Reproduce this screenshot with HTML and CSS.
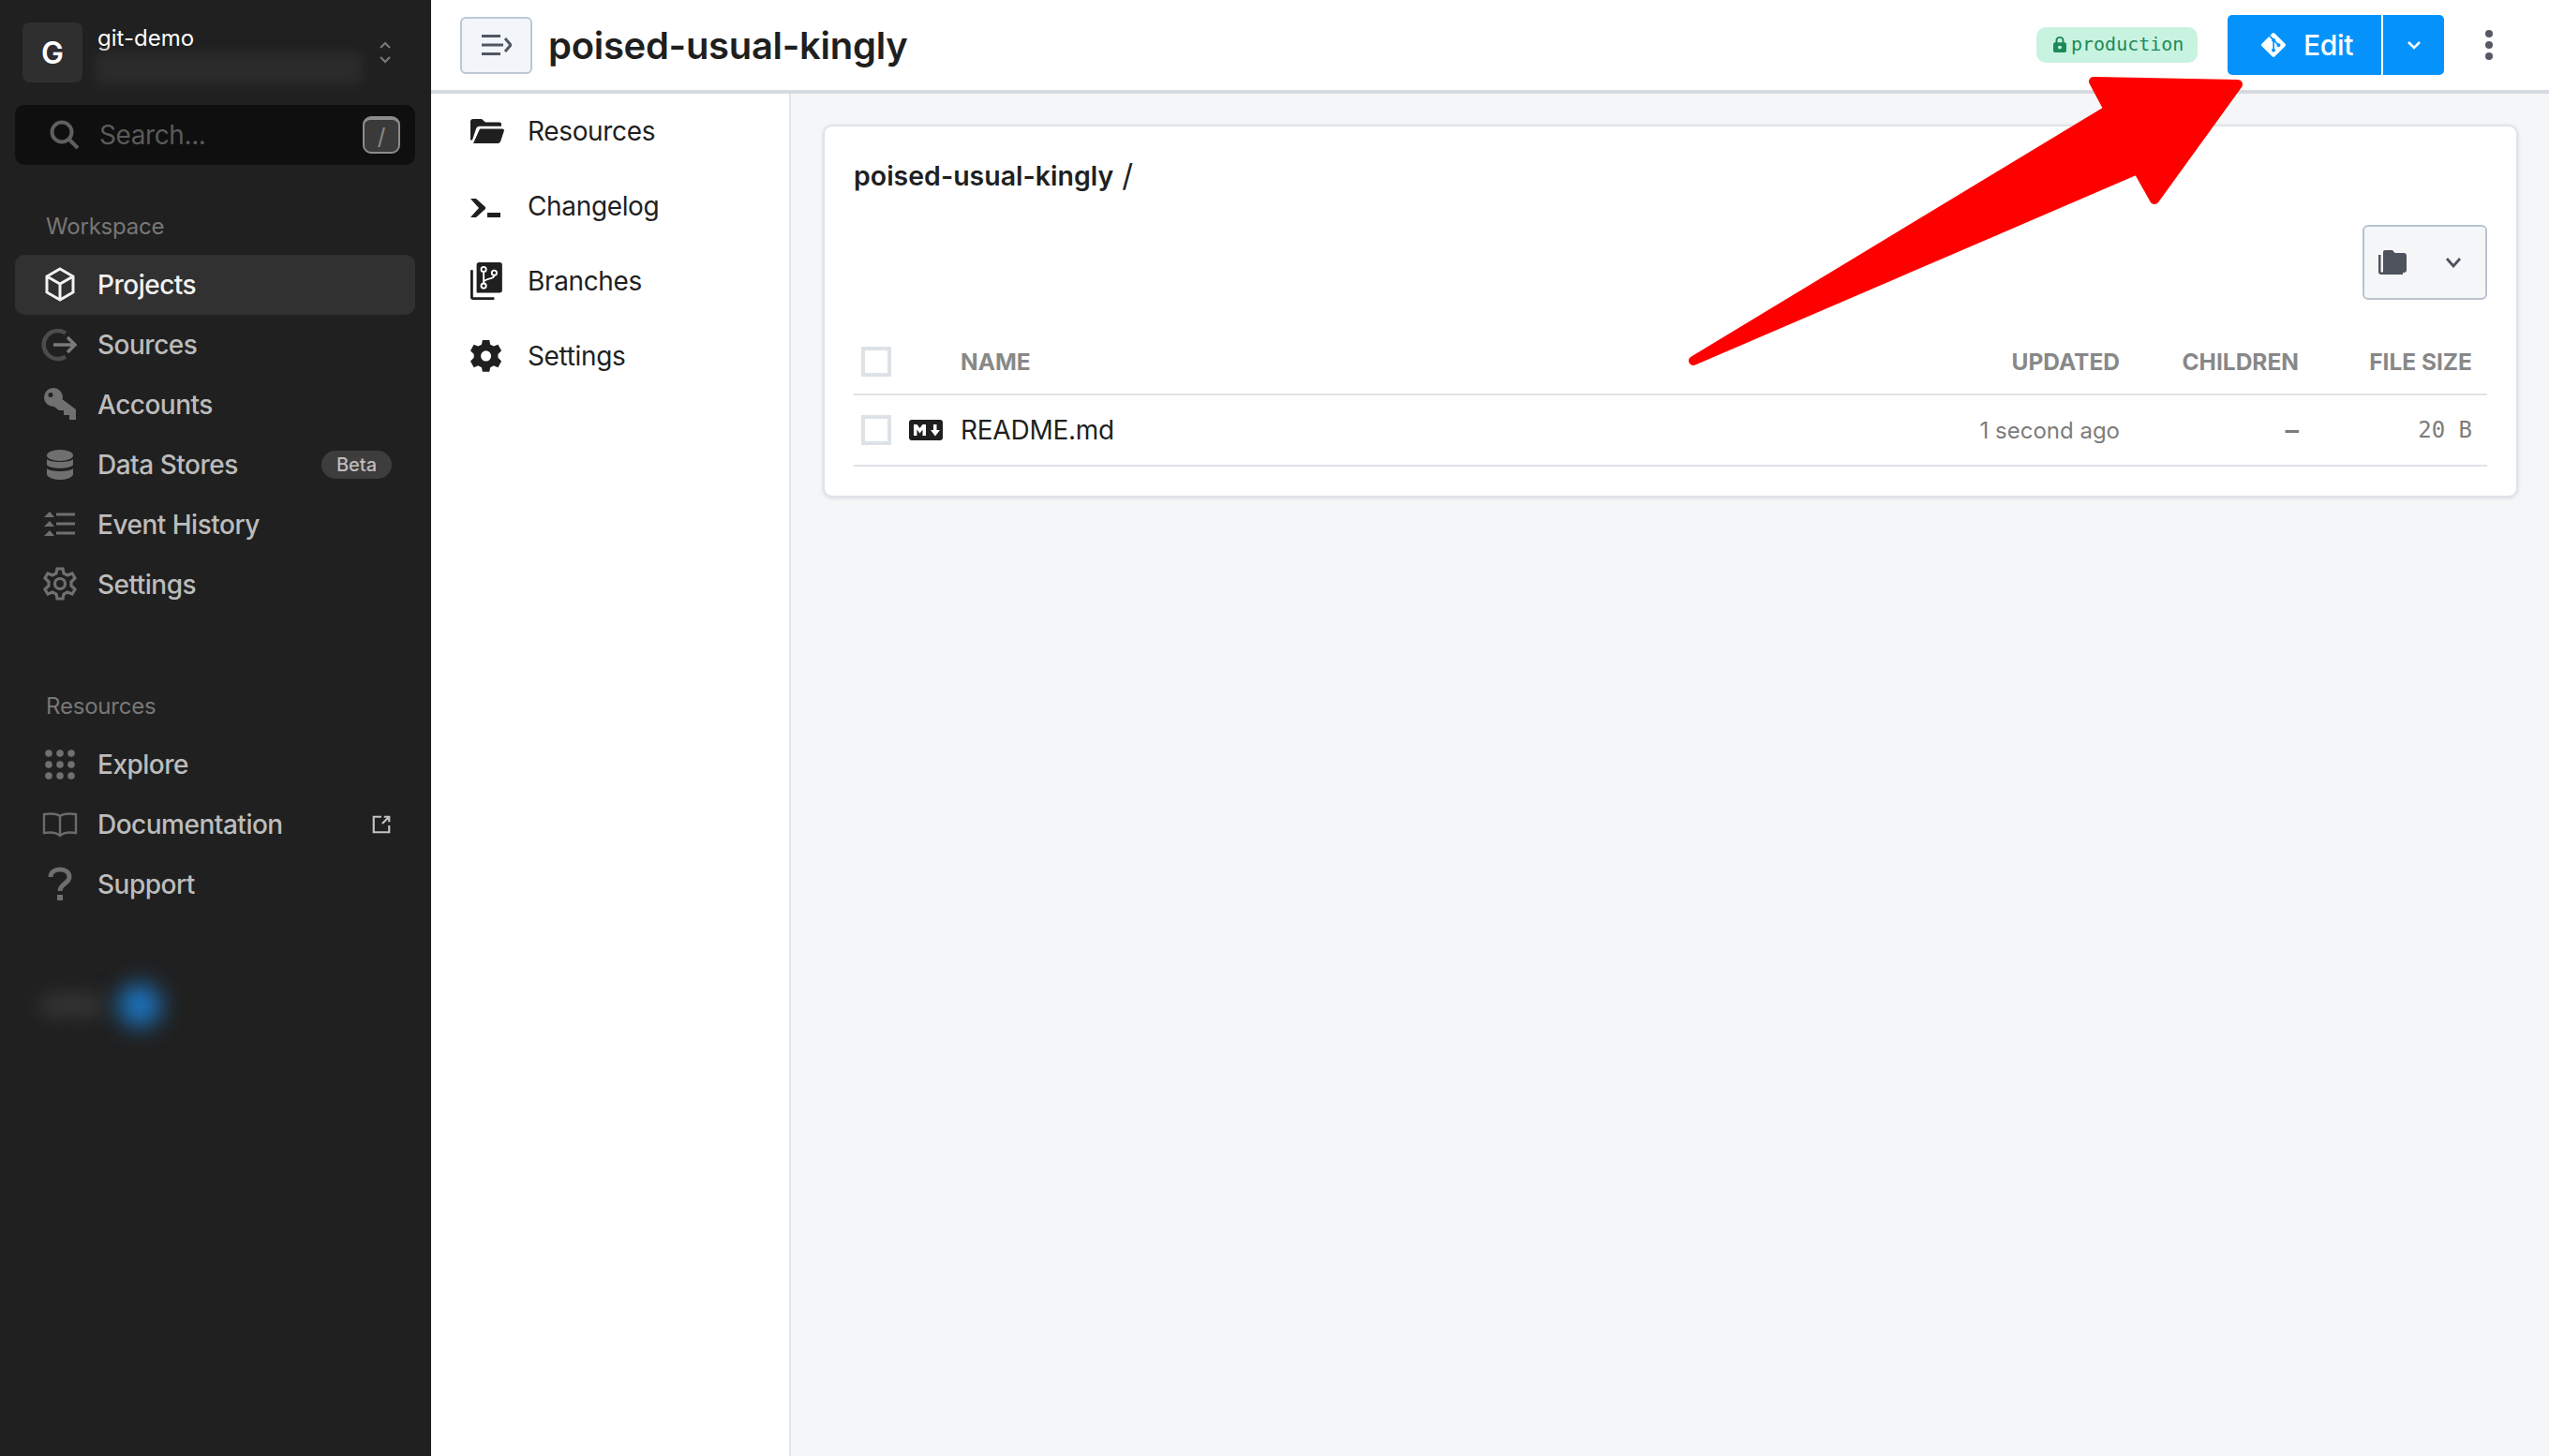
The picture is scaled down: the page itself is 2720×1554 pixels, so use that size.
FILE: index.html
```html
<!DOCTYPE html>
<html lang="en">
<head>
<meta charset="utf-8">
<title>poised-usual-kingly</title>
<link rel="stylesheet" href="styles.css">
</head>
<body>
<div class="app">
  <aside class="sidebar">
    <div class="org">
      <div class="avatar">G</div>
      <div class="org-text">
        <div class="org-name">git-demo</div>
        <div class="org-blur"></div>
      </div>
      <svg class="updown" viewBox="0 0 14 24"><path d="M2 7l5-5 5 5M2 17l5 5 5-5"/></svg>
    </div>
    <div class="search">
      <svg class="search-icon" viewBox="0 0 32 32"><circle cx="13" cy="13" r="10.5"/><path d="M20.5 20.5L30 30"/></svg>
      <span class="search-text">Search...</span>
      <span class="kbd">/</span>
    </div>
    <div class="label label-first">Workspace</div>
    <nav class="nav">
      <a class="item active">
        <span class="ico"><svg viewBox="0 0 40 40"><path class="line w" d="M20 3l14 8v17l-14 8-14-8V11zM6 11l14 8 14-8M20 19v17"/></svg></span>
        <span>Projects</span>
      </a>
      <a class="item">
        <span class="ico"><svg viewBox="0 0 40 40"><path class="line thick" d="M26 7.500A15 15 0 1 0 26 32.500"/><path class="line arrowline" d="M13 20h23M28 12l8 8-8 8"/></svg></span>
        <span>Sources</span>
      </a>
      <a class="item">
        <span class="ico"><svg viewBox="0 0 40 40"><circle class="fill" cx="13" cy="12" r="10"/><path class="fill" d="M17 10l20 15v11h-7v-5h-6v-5h-5l-9-7z"/><circle class="hole" cx="10" cy="9.500" r="2.500"/></svg></span>
        <span>Accounts</span>
      </a>
      <a class="item">
        <span class="ico"><svg viewBox="0 0 40 40"><ellipse class="fill" cx="20" cy="10" rx="14" ry="6"/><path class="fill" d="M6 14c3 4 25 4 28 0v6c-3 5-25 5-28 0zM6 24c3 4 25 4 28 0v6c0 3-6 6-14 6S6 33 6 30z"/></svg></span>
        <span>Data Stores</span>
        <span class="tag">Beta</span>
      </a>
      <a class="item">
        <span class="ico"><svg viewBox="0 0 40 40"><path class="fill" d="M9 6l5 6H3zM9 16l5 6H3zM9 26l5 6H3z"/><path class="line bars" d="M16 9h20M16 19h20M16 29h20"/></svg></span>
        <span>Event History</span>
      </a>
      <a class="item">
        <span class="ico"><svg viewBox="0 0 40 40"><path class="line gear" d="M17 3h6l1 5 4 2 5-2 3 5-4 4v4l4 4-3 5-5-2-4 2-1 5h-6l-1-5-4-2-5 2-3-5 4-4v-4l-4-4 3-5 5 2 4-2z"/><circle class="line gear" cx="20" cy="19" r="5.500"/></svg></span>
        <span>Settings</span>
      </a>
    </nav>
    <div class="label label-second">Resources</div>
    <nav class="nav">
      <a class="item">
        <span class="ico"><svg viewBox="0 0 40 40"><g class="fill"><circle cx="8" cy="8" r="3.800"/><circle cx="20" cy="8" r="3.800"/><circle cx="32" cy="8" r="3.800"/><circle cx="8" cy="20" r="3.800"/><circle cx="20" cy="20" r="3.800"/><circle cx="32" cy="20" r="3.800"/><circle cx="8" cy="32" r="3.800"/><circle cx="20" cy="32" r="3.800"/><circle cx="32" cy="32" r="3.800"/></g></svg></span>
        <span>Explore</span>
      </a>
      <a class="item">
        <span class="ico"><svg viewBox="0 0 40 40"><path class="line" d="M20 11c-4-3-10-3-17-2v20c7-1 13-1 17 3 4-4 10-4 17-3V9c-7-1-13-1-17 2zM20 11v21"/></svg></span>
        <span>Documentation</span>
        <svg class="ext" viewBox="0 0 24 24"><path d="M21 13v8H3V3h9M13 11l8-8M15 3h6v6"/></svg>
      </a>
      <a class="item">
        <span class="ico"><svg viewBox="0 0 40 40"><path class="line question" d="M10 12c0-5 4-8 10-8s10 3 10 8c0 7-10 7-10 15"/><rect class="fill" x="17" y="31" width="6" height="6"/></svg></span>
        <span>Support</span>
      </a>
    </nav>
    <div class="blurred">
      <span class="blur-gray"></span>
      <span class="blur-blue"></span>
    </div>
  </aside>

  <div class="main">
    <header class="topbar">
      <button class="toggle">
        <svg viewBox="0 0 32 22"><path d="M0 1.500h20M0 11h23M0 20.500h20M25 4l6 7-6 7"/></svg>
      </button>
      <h1 class="title">poised-usual-kingly</h1>
      <span class="badge">
        <svg viewBox="0 0 14 20" preserveAspectRatio="none"><path class="shackle" d="M3.500 9V5.500a3.500 3.500 0 0 1 7 0V9"/><path class="body" d="M2 8h10a2 2 0 0 1 2 2v8a2 2 0 0 1-2 2H2a2 2 0 0 1-2-2v-8a2 2 0 0 1 2-2zm5 4a2 2 0 1 0 0 4 2 2 0 0 0 0-4z"/></svg>
        production
      </span>
      <div class="edit">
        <span class="edit-main">
          <svg viewBox="0 0 24 24"><path d="M23.546 10.93L13.067.452c-.604-.603-1.582-.603-2.188 0L8.708 2.627l2.76 2.76c.645-.215 1.379-.07 1.889.441.516.515.658 1.258.438 1.9l2.658 2.66c.645-.223 1.387-.078 1.9.435.721.72.721 1.884 0 2.604-.719.719-1.881.719-2.6 0-.539-.541-.674-1.337-.404-1.996L12.86 8.955v6.525c.176.086.342.203.488.348.713.721.713 1.883 0 2.6-.719.721-1.889.721-2.609 0-.719-.719-.719-1.879 0-2.598.182-.18.387-.316.605-.406V8.835c-.217-.091-.424-.222-.6-.401-.545-.545-.676-1.342-.396-2.009L7.636 3.7.45 10.881c-.6.605-.6 1.584 0 2.189l10.48 10.477c.604.604 1.582.604 2.186 0l10.43-10.43c.605-.603.605-1.582 0-2.187"/></svg>
          Edit
        </span>
        <span class="edit-caret"><svg viewBox="0 0 16 10"><path d="M2 2l6 6 6-6"/></svg></span>
      </div>
      <div class="dots"><i></i><i></i><i></i></div>
    </header>
    <div class="content">
      <nav class="subnav">
        <a class="subitem">
          <svg viewBox="0 0 36 44"><g transform="translate(0 9) scale(1 .87)"><path d="M0 3a3 3 0 0 1 3-3h9l4 4h15a2 2 0 0 1 2 2v3H10a4 4 0 0 0-4 3L2 26H0zM10 12h24a2 2 0 0 1 2 2l-4 14a3 3 0 0 1-3 2H3z"/></g></svg>
          <span>Resources</span>
        </a>
        <a class="subitem">
          <svg viewBox="0 0 36 44"><path d="M0 14h6l10 9v2L6 34H0l9-10zM18 29h14v5H18z"/></svg>
          <span>Changelog</span>
        </a>
        <a class="subitem">
          <svg viewBox="0 0 36 44"><g transform="translate(0 2) scale(.94 .93)"><path d="M10 0h23a3 3 0 0 1 3 3v29a3 3 0 0 1-3 3H7V3a3 3 0 0 1 3-3z"/><path d="M0 9h3v31h24v3H3a3 3 0 0 1-3-3z"/><g class="branch"><circle cx="15" cy="8" r="2.800"/><circle cx="15" cy="27" r="2.800"/><circle cx="27" cy="12" r="2.800"/><path d="M15 11v13M27 15c0 5-12 3-12 8"/></g></g></svg>
          <span>Branches</span>
        </a>
        <a class="subitem">
          <svg viewBox="0 0 36 44"><g transform="translate(0 5) scale(.92 .94)"><path fill-rule="evenodd" d="M14 0h8l1 5 4 2 5-2 4 7-4 4v4l4 4-4 7-5-2-4 2-1 5h-8l-1-5-4-2-5 2-4-7 4-4v-4l-4-4 4-7 5 2 4-2zm4 12a6 6 0 1 0 0 12 6 6 0 0 0 0-12z"/></g></svg>
          <span>Settings</span>
        </a>
      </nav>
      <section class="pane">
        <div class="card">
          <div class="crumb"><strong>poised-usual-kingly</strong><span class="slash">/</span></div>
          <div class="tools">
            <button class="view">
              <svg class="view-folder" viewBox="0 0 30 26"><path d="M7 0h8l2.500 3H27a3 3 0 0 1 3 3v15a3 3 0 0 1-3 3H5V2a2 2 0 0 1 2-2z"/><path d="M0 5h2.500v18.500H26V26H3a3 3 0 0 1-3-3z"/></svg>
              <svg class="view-caret" viewBox="0 0 18 12"><path d="M2 2l7 8 7-8"/></svg>
            </button>
          </div>
          <div class="row head">
            <span class="cell-check"><i class="check"></i></span>
            <span>NAME</span>
            <span class="right">UPDATED</span>
            <span class="right">CHILDREN</span>
            <span class="right">FILE SIZE</span>
          </div>
          <div class="row body-row">
            <span class="cell-check">
              <i class="check"></i>
              <svg class="md" viewBox="0 0 36 22"><rect width="36" height="22" rx="3"/><path class="md-m" d="M5 17V5h3.500l3 4 3-4H18v12h-3.500v-6.500l-3 4-3-4V17zM26 5h3.500v6H33l-5 6.500-5-6.500h3z"/></svg>
            </span>
            <span class="fname">README.md</span>
            <span class="right muted">1 second ago</span>
            <span class="right mono dash">&ndash;</span>
            <span class="right mono">20 B</span>
          </div>
        </div>
      </section>
    </div>
  </div>

  <svg class="arrow" viewBox="0 0 2720 1554"><path d="M1807 385L2250 117L2234 87L2388 90L2299 213L2281 181Z"/></svg>
</div>
</body>
</html>
```
FILE: styles.css
```css
* { box-sizing: border-box; }
html, body { margin: 0; height: 100%; }
body { font-family: Inter, "Liberation Sans", sans-serif; color: #1f1f1f; overflow: hidden; background: #fff; }
.app { position: relative; display: flex; height: 1554px; }

.sidebar { width: 460px; flex: none; background: #202020; color: #c6c6c6; padding: 24px 17px 0 16px; }
.org { display: flex; align-items: center; padding-left: 8px; height: 64px; }
.avatar { width: 64px; height: 64px; border-radius: 8px; background: #2f2f2f; color: #fff; font-weight: 600; font-size: 32px; display: flex; align-items: center; justify-content: center; }
.org-text { margin-left: 14px; width: 284px; height: 68px; }
.org-name { color: #fff; font-size: 24px; line-height: 30px; margin-top: 4px; padding-left: 2px; }
.org-blur { height: 34px; background: #2e2e2e; filter: blur(6px); opacity: .8; }
.updown { width: 14px; height: 24px; margin-left: 18px; fill: none; stroke: #7a7a7a; stroke-width: 2; }
.search { margin-top: 24px; height: 64px; border-radius: 10px; background: #0f0f0f; display: flex; align-items: center; padding-left: 37px; padding-right: 16px; }
.search-icon { width: 32px; height: 32px; fill: none; stroke: #5f5f5f; stroke-width: 4; }
.search-text { margin-left: 21px; font-size: 28px; letter-spacing: -.4px; color: #5a5a5a; flex: 1; }
.kbd { width: 40px; height: 40px; border: 2px solid #8c8c8c; border-top-width: 4px; border-radius: 9px; background: #3a3a3a; color: #8a8a8a; font-size: 24px; display: flex; align-items: center; justify-content: center; }
.label { font-size: 24px; letter-spacing: -.2px; color: #777; padding-left: 33px; line-height: 30px; }
.label-first { margin-top: 51px; }
.label-second { margin-top: 83px; }
.nav { display: flex; flex-direction: column; margin-top: 15px; }
.item { height: 64px; border-radius: 10px; display: flex; align-items: center; padding-left: 28px; padding-right: 25px; font-size: 28px; letter-spacing: -.5px; font-weight: 500; color: #bcbcbc; }
.item.active { background: #313131; color: #f2f2f2; }
.ico { width: 40px; height: 40px; margin-right: 20px; flex: none; }
.ico svg { width: 40px; height: 40px; display: block; }
.line { fill: none; stroke: #6b6b6b; stroke-width: 2.400; }
.line.w { stroke: #f2f2f2; stroke-width: 3; }
.line.thick { stroke-width: 4.500; stroke: #4c4c4c; }
.line.arrowline { stroke: #7a7a7a; stroke-width: 3.500; }
.line.bars { stroke: #707070; stroke-width: 3; }
.line.gear { stroke-width: 3.200; stroke: #707070; }
.line.question { stroke-width: 5; stroke: #6e6e6e; }
.fill { fill: #707070; }
.hole { fill: #202020; }
.tag { margin-left: auto; width: 75px; height: 30px; border-radius: 15px; background: #3d3d3d; color: #bdbdbd; font-size: 20px; letter-spacing: 0; display: flex; align-items: center; justify-content: center; }
.ext { width: 22px; height: 22px; margin-left: auto; fill: none; stroke: #c2c2c2; stroke-width: 2.400; }
.blurred { display: flex; align-items: center; margin-top: 67px; padding-left: 26px; height: 60px; }
.blur-gray { width: 70px; height: 24px; border-radius: 12px; background: #353535; filter: blur(10px); }
.blur-blue { width: 46px; height: 46px; margin-left: 14px; border-radius: 50%; background: #1c74c0; filter: blur(12px); }

.main { flex: 1; display: flex; flex-direction: column; min-width: 0; }
.topbar { height: 100px; flex: none; background: #fff; border-bottom: 4px solid #d6dbe1; display: flex; align-items: center; padding-left: 31px; padding-right: 60px; }
.toggle { width: 77px; height: 61px; padding: 0; border: 2px solid #bcc7d3; border-radius: 6px; background: #f2f6fa; display: flex; align-items: center; justify-content: center; }
.toggle svg { width: 32px; height: 22px; fill: none; stroke: #515661; stroke-width: 3; }
.title { margin: 0 0 0 17px; font-size: 40px; font-weight: 600; letter-spacing: -.3px; flex: 1; }
.badge { width: 172px; height: 38px; border-radius: 10px; background: #c8f3e0; color: #1e8a5a; font-family: "DejaVu Sans Mono", monospace; font-size: 20px; display: flex; align-items: center; padding: 0 0 2px 18px; gap: 5px; }
.badge svg { width: 14px; height: 18px; }
.shackle { fill: none; stroke: #1e8a5a; stroke-width: 2; }
.body { fill: #1e8a5a; fill-rule: evenodd; }
.edit { margin-left: 32px; width: 231px; height: 64px; border-radius: 5px; background: #0593fb; color: #fff; display: flex; }
.edit-main { width: 166px; display: flex; align-items: center; padding-left: 36px; gap: 19px; font-size: 30px; font-weight: 500; letter-spacing: -.3px; border-right: 2px solid #fff; }
.edit-main svg { width: 26px; height: 26px; fill: #fff; flex: none; }
.edit-caret { flex: 1; display: flex; align-items: center; justify-content: center; }
.edit-caret svg { width: 16px; height: 10px; fill: none; stroke: #fff; stroke-width: 2.500; }
.dots { margin-left: 44px; display: flex; flex-direction: column; gap: 4px; }
.dots i { width: 8px; height: 8px; border-radius: 50%; background: #555964; display: block; }

.content { flex: 1; display: flex; min-height: 0; }
.subnav { width: 384px; flex: none; background: #fff; border-right: 2px solid #e2e6ea; padding: 0 0 0 42px; display: flex; flex-direction: column; }
.subitem { height: 80px; display: flex; align-items: center; font-size: 28px; letter-spacing: -.35px; color: #1f1f1f; }
.subitem svg { width: 36px; height: 44px; fill: #1f1f1f; margin-right: 25px; flex: none; }
.branch { fill: none; stroke: #fff; stroke-width: 2; }
.pane { flex: 1; background: #f5f6f8; padding: 33px 33px 0 34px; }
.card { height: 398px; background: #fff; border-radius: 10px; border: 2px solid #dfe3e8; box-shadow: 0 1px 4px rgba(20,30,50,.12); padding: 0 31px 0 31px; }
.crumb { height: 104px; display: flex; align-items: center; font-size: 28.500px; }
.crumb strong { font-weight: 600; }
.slash { margin-left: 9px; font-size: 33px; }
.tools { height: 81px; display: flex; justify-content: flex-end; margin-top: 1px; }
.view { width: 133px; height: 80px; padding: 0 0 0 15px; border: 2px solid #b9c3cf; border-radius: 6px; background: #f5f6f8; display: flex; align-items: center; }
.view-folder { width: 30px; height: 26px; fill: #4d525d; }
.view-caret { width: 18px; height: 12px; margin-left: 41px; fill: none; stroke: #4d525d; stroke-width: 2.800; }
.row { display: grid; grid-template-columns: 114px 1fr 240px 191px 185px; padding-right: 16px; align-items: center; }
.head { height: 71px; margin-top: 30px; border-bottom: 2px solid #dfe3e8; font-size: 24.500px; font-weight: 700; color: #888; }
.body-row { height: 76px; border-bottom: 2px solid #dfe3e8; font-size: 28px; letter-spacing: -.25px; }
.cell-check { display: flex; align-items: center; padding-left: 8px; }
.check { width: 32px; height: 32px; border: 4px solid #dce2e8; display: block; background: #fff; }
.md { width: 36px; height: 22px; margin-left: 19px; fill: #1f1f1f; }
.md-m { fill: #fff; }
.right { text-align: right; }
.muted { color: #7c7c7c; font-size: 24px; letter-spacing: 0; }
.mono { font-family: "DejaVu Sans Mono", monospace; font-size: 24px; letter-spacing: 0; color: #7c7c7c; }
.dash { font-weight: 700; }

.arrow { position: absolute; inset: 0; width: 2720px; height: 1554px; pointer-events: none; }
.arrow path { fill: #ff0000; stroke: #ff0000; stroke-width: 10; stroke-linejoin: round; }
```
